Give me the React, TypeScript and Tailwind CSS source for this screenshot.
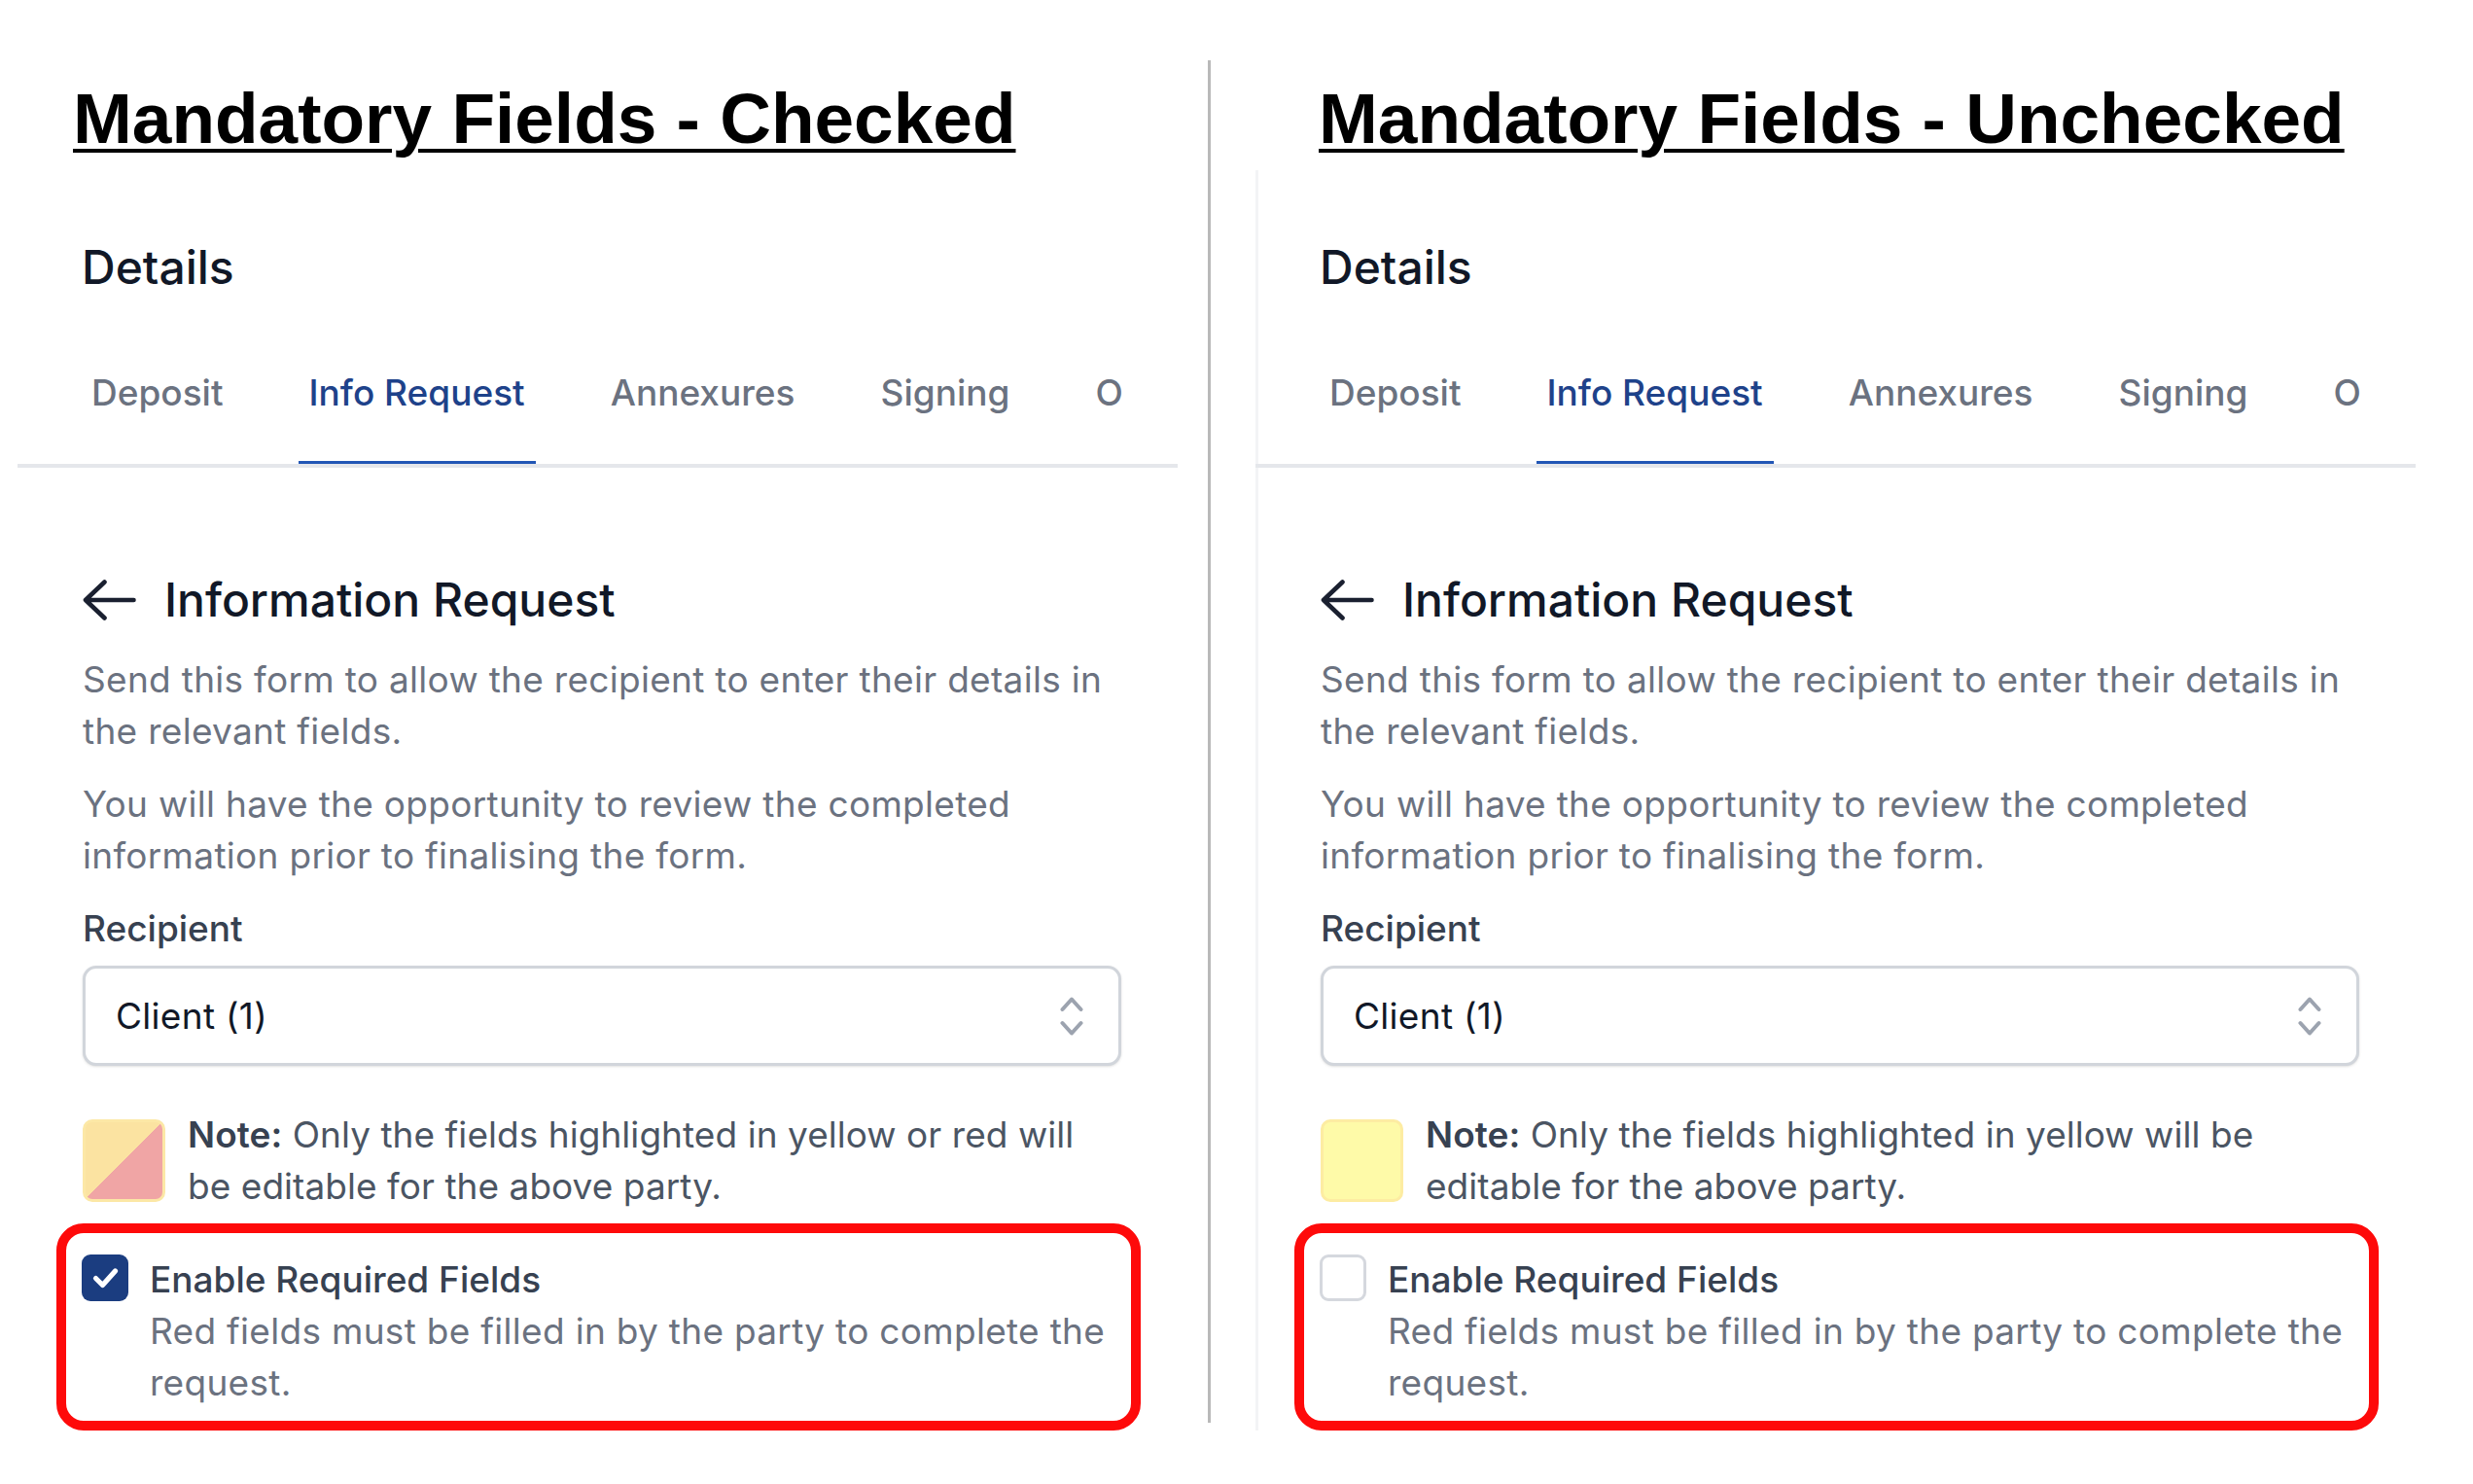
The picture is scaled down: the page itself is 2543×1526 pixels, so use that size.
import React from 'react';

type PanelProps = {
  checked: boolean;
  note: string;
  swatch: 'split' | 'yellow';
  bordered?: boolean;
};

const TABS = ['Deposit', 'Info Request', 'Annexures', 'Signing', 'O'];

function BackArrow() {
  return (
    <svg width="55" height="42" viewBox="0 0 55 42" fill="none" className="shrink-0">
      <path
        d="M52.5 21H3M3 21L22.5 2.5M3 21L22.5 39.5"
        stroke="#1a2030"
        strokeWidth="4.6"
        strokeLinecap="round"
        strokeLinejoin="round"
      />
    </svg>
  );
}

function UpDown() {
  return (
    <svg width="24" height="40" viewBox="0 0 24 40" fill="none" className="shrink-0">
      <path
        d="M2.5 13L12 2.5L21.5 13M2.5 27L12 37.5L21.5 27"
        stroke="#9ca3af"
        strokeWidth="4"
        strokeLinecap="round"
        strokeLinejoin="round"
      />
    </svg>
  );
}

function Checkbox({ checked }: { checked: boolean }) {
  if (!checked) {
    return <div className="mt-[1px] h-[48px] w-[48px] shrink-0 rounded-[9px] border-[3px] border-[#d5d8de] bg-white" />;
  }
  return (
    <div className="mt-[1px] flex h-[48px] w-[48px] shrink-0 items-center justify-center rounded-[9px] bg-[#1b3d80]">
      <svg width="48" height="48" viewBox="0 0 48 48" fill="none">
        <path d="M14.5 24.5L21.5 31.5L34.5 17" stroke="white" strokeWidth="5.2" strokeLinecap="round" strokeLinejoin="round" />
      </svg>
    </div>
  );
}

function Panel({ checked, note, swatch, bordered }: PanelProps) {
  return (
    <div
      className={
        'mt-[17px] w-[1193px] pt-[76px] font-[family-name:Inter,sans-serif] ' +
        (bordered ? 'shadow-[inset_3px_0_0_#f3f4f6]' : '')
      }
    >
      <h2 className="pl-[66px] text-[48px] leading-[48px] font-medium text-[#111827]">Details</h2>

      {/* tabs */}
      <nav className="mt-[78px] flex gap-[66px] overflow-hidden border-b-4 border-[#e5e7eb] pl-[65px]">
        {TABS.map((t) => (
          <div
            key={t}
            className={
              '-mb-[2px] border-b-[5px] px-[11px] pb-[44px] text-[37px] leading-[53px] font-medium whitespace-nowrap ' +
              (t === 'Info Request' ? 'border-[#2256b5] text-[#1e428a]' : 'border-transparent text-[#6b7280]')
            }
          >
            {t}
          </div>
        ))}
      </nav>

      <div className="w-[1135px] pl-[67px]">
        <div className="mt-[99px] flex items-center gap-[29px]">
          <BackArrow />
          <h3 className="text-[48px] leading-[74px] font-medium text-[#111827]">Information Request</h3>
        </div>

        <p className="mt-[18px] text-[37px] leading-[53px] tracking-[0.3px] text-[#6b7280]">
          Send this form to allow the recipient to enter their details in the relevant fields.
        </p>
        <p className="mt-[22px] text-[37px] leading-[53px] tracking-[0.3px] text-[#6b7280]">
          You will have the opportunity to review the completed information prior to finalising the form.
        </p>

        <div className="mt-[22px] text-[37px] leading-[53px] font-medium text-[#374151]">Recipient</div>

        <div className="mt-[12px] flex h-[103px] items-center justify-between rounded-[14px] border-[3px] border-[#d1d5db] bg-white pr-[36px] pl-[31px] shadow-sm">
          <span className="text-[37px] leading-[53px] tracking-[0.3px] text-[#111827]">Client (1)</span>
          <UpDown />
        </div>

        <div className="mt-[44px] flex items-start gap-[23px]">
          <div
            className={
              'mt-[11px] h-[85px] w-[85px] shrink-0 rounded-[10px] border-[3px] ' +
              (swatch === 'split'
                ? 'border-[#fce8a6] bg-[linear-gradient(to_bottom_right,#fbe3a1_50%,#f0a5a5_50%)]'
                : 'border-[#fdeca2] bg-[#fefaa8]')
            }
          />
          <p className="text-[37px] leading-[53px] tracking-[0.05px] text-[#4b5563]">
            <span className="font-semibold text-[#374151]">Note:</span> {note}
          </p>
        </div>

        {/* highlighted annotation */}
        <div className="mt-[12px] -mr-[20px] -ml-[27px] rounded-[28px] border-[10px] border-[#fe0a0a] pt-[21px] pr-[10px] pb-[13px] pl-[16px]">
          <div className="flex items-start gap-[22px]">
            <Checkbox checked={checked} />
            <div>
              <div className="text-[37px] leading-[53px] font-medium text-[#374151]">Enable Required Fields</div>
              <div className="text-[37px] leading-[53px] tracking-[0.3px] text-[#6b7280]">
                Red fields must be filled in by the party to complete the request.
              </div>
            </div>
          </div>
        </div>
      </div>
    </div>
  );
}

export default function App() {
  return (
    <div className="flex h-[1526px] w-[2543px] overflow-hidden bg-white">
      <section className="w-[1242px] shrink-0 pt-[85px]">
        <h1 className="ml-[75px] font-[family-name:'Liberation_Sans',Arial,sans-serif] text-[73px] leading-[73px] font-bold text-black underline decoration-[4px] underline-offset-[6px]">
          Mandatory Fields - Checked
        </h1>
        <div className="ml-[18px]">
          <Panel checked note="Only the fields highlighted in yellow or red will be editable for the above party." swatch="split" />
        </div>
      </section>

      <div className="mt-[62px] h-[1401px] w-[3px] shrink-0 bg-[#b9b9b9]" />

      <section className="flex-1 pt-[85px]">
        <h1 className="ml-[111px] font-[family-name:'Liberation_Sans',Arial,sans-serif] text-[73px] leading-[73px] font-bold text-black underline decoration-[4px] underline-offset-[6px]">
          Mandatory Fields - Unchecked
        </h1>
        <div className="ml-[46px]">
          <Panel
            checked={false}
            note="Only the fields highlighted in yellow will be editable for the above party."
            swatch="yellow"
            bordered
          />
        </div>
      </section>
    </div>
  );
}
